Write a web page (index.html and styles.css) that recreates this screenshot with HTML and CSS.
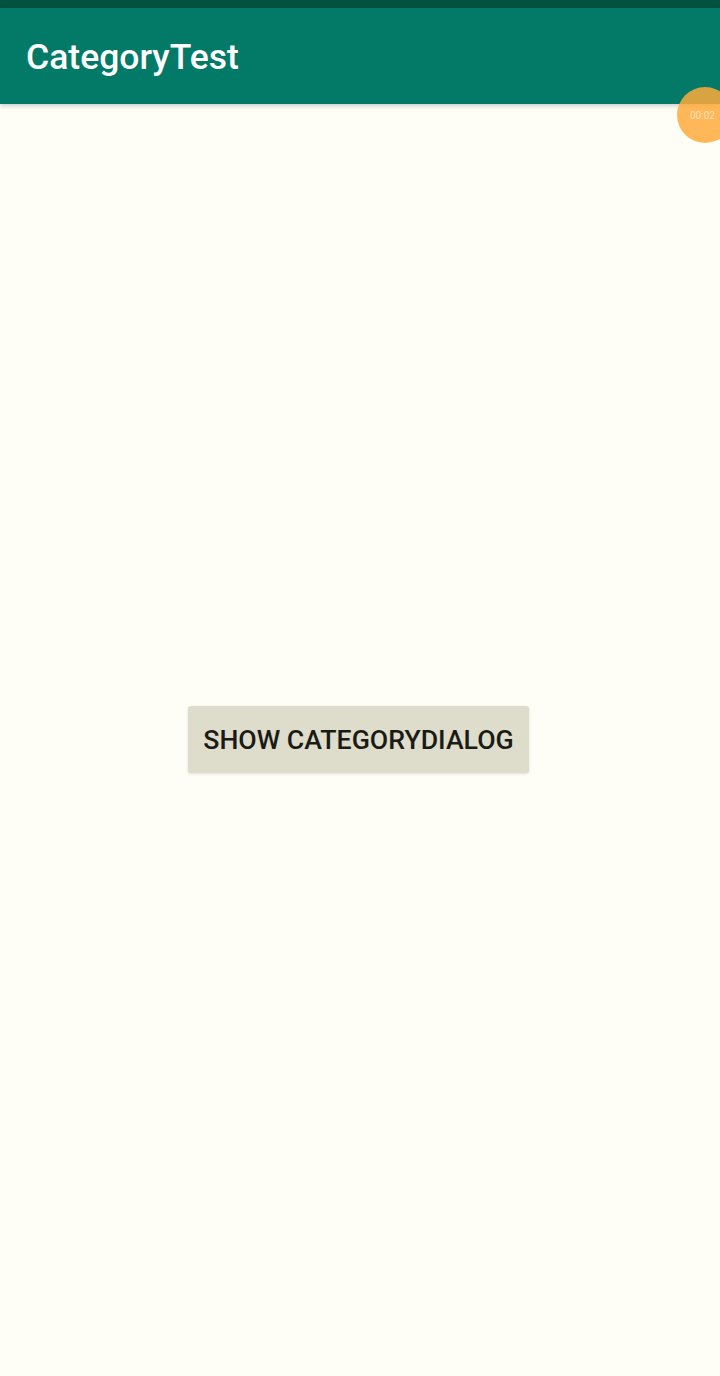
FILE: index.html
```html
<!DOCTYPE html>
<html>
<head>
<meta charset="utf-8">
<link rel="stylesheet" href="styles.css">
</head>
<body>
<div class="screen">
  <div class="statusbar"></div>
  <header class="toolbar">
    <h1 class="title">CategoryTest</h1>
  </header>
  <main class="content">
    <button class="btn">SHOW CATEGORYDIALOG</button>
  </main>
  <div class="recorder"><span class="rec-time">00:02</span></div>
</div>
</body>
</html>
```
FILE: styles.css
```css
html, body {
  margin: 0;
  padding: 0;
}
body {
  width: 720px;
  height: 1376px;
  overflow: hidden;
  background: #fefef6;
  font-family: Roboto, "Noto Sans", sans-serif;
}
.screen {
  position: relative;
  width: 720px;
  height: 1376px;
  display: flex;
  flex-direction: column;
}
.statusbar {
  height: 8px;
  background: #01523f;
  flex: none;
}
.toolbar {
  height: 96px;
  flex: none;
  background: #037a68;
  display: flex;
  align-items: center;
  padding-left: 26px;
  box-shadow: 0 2px 4px rgba(0,0,0,0.18);
  position: relative;
  z-index: 1;
}
.title {
  margin: 0;
  color: #ffffff;
  font-size: 35.5px;
  font-weight: 500;
  letter-spacing: 0;
  margin-top: 1px;
}
.content {
  flex: 1;
  display: flex;
  justify-content: center;
  align-items: flex-start;
  padding-top: 602px;
  padding-right: 3px;
}
.btn {
  width: 341px;
  height: 67px;
  border: none;
  border-radius: 3px;
  background: #dedccb;
  box-shadow: 0 1px 3px rgba(0,0,0,0.12);
  color: #1b1b16;
  font-family: Roboto, "Noto Sans", sans-serif;
  font-size: 26.7px;
  font-weight: 500;
  padding: 0;
}
.recorder {
  position: absolute;
  left: 677px;
  top: 87px;
  width: 56px;
  height: 56px;
  border-radius: 50%;
  background: rgba(255, 170, 60, 0.85);
  z-index: 2;
  display: flex;
  align-items: center;
  padding-left: 13px;
  box-sizing: border-box;
}
.rec-time {
  color: rgba(255,255,255,0.6);
  font-size: 10px;
  font-family: Roboto, sans-serif;
}
```
